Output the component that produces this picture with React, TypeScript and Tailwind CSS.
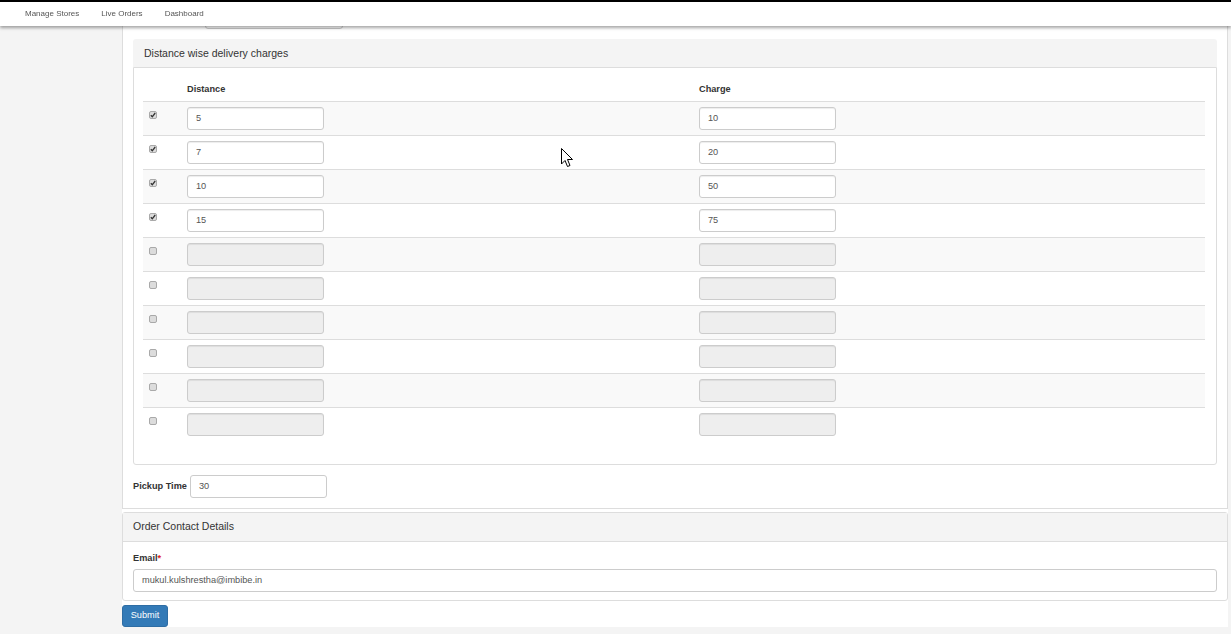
const rows = [
  { on: true, distance: "5", charge: "10" },
  { on: true, distance: "7", charge: "20" },
  { on: true, distance: "10", charge: "50" },
  { on: true, distance: "15", charge: "75" },
  { on: false, distance: "", charge: "" },
  { on: false, distance: "", charge: "" },
  { on: false, distance: "", charge: "" },
  { on: false, distance: "", charge: "" },
  { on: false, distance: "", charge: "" },
  { on: false, distance: "", charge: "" },
];

function Check({ on }: { on: boolean }) {
  return (
    <span className="mt-[3px] flex h-[8px] w-[8px] items-center justify-center rounded-[2px] border border-[#a9a9a9] bg-[#dcdcdc]">
      {on ? (
        <svg width="6" height="6" viewBox="0 0 6 6">
          <path d="M0.8 3.2 L2.3 4.8 L5.2 1" fill="none" stroke="#333" strokeWidth="1.3" />
        </svg>
      ) : null}
    </span>
  );
}

function Field({ value, disabled }: { value: string; disabled: boolean }) {
  return (
    <div
      className={
        "flex h-[23px] w-[137px] items-center rounded-[3px] border border-[#ccc] px-[8px] text-[9.2px] text-[#555] shadow-[inset_0_1px_1px_rgba(0,0,0,0.075)] " +
        (disabled ? "bg-[#eee]" : "bg-white")
      }
    >
      {value}
    </div>
  );
}

export default function App() {
  return (
    <div className="relative min-h-[634px] overflow-hidden bg-[#f4f4f4] font-['Liberation_Sans',Arial,sans-serif] text-[#333]">
      {/* fixed top bar */}
      <div className="fixed left-0 right-0 top-0 z-10 flex h-[26px] items-center border-t-2 border-black bg-white text-[8px] text-[#555] shadow-[0_2px_3px_rgba(0,0,0,0.35)]">
        <span className="ml-[25px]">Manage Stores</span>
        <span className="ml-[22px]">Live Orders</span>
        <span className="ml-[22px]">Dashboard</span>
      </div>

      <div className="ml-[122px] w-[1106px] bg-white">
        {/* store details panel */}
        <div className="border-x border-b border-[#ddd] px-[10px] pb-[10px]">
          <div className="ml-[72px] mt-[6px] h-[23px] w-[138px] rounded-[3px] border border-[#ccc]"></div>

          <div className="mt-[10px]">
            <div className="flex h-[28px] items-center rounded-t-[3px] bg-[#f4f4f4] px-[11px] pt-[1px] text-[10.5px] text-[#333]">
              Distance wise delivery charges
            </div>
            <div className="rounded-b-[3px] border border-[#ddd] bg-white px-[9px] pb-[23px] pt-[10px]">
              <div className="w-[1062px] text-[9.2px]">
                <div className="flex h-[24px] items-center border-b border-[#ddd] font-bold">
                  <div className="w-[38px]"></div>
                  <div className="w-[512px] pl-[6px]">Distance</div>
                  <div className="pl-[6px]">Charge</div>
                </div>
                {rows.map((r, i) => (
                  <div
                    key={i}
                    className={
                      "flex items-start pt-[5px] " +
                      (i > 0 ? "h-[34px] border-t border-[#ddd] " : "h-[33px] ") +
                      (i % 2 === 0 ? "bg-[#f9f9f9]" : "bg-white")
                    }
                  >
                    <div className="w-[38px] pl-[6px] pt-[1px]">
                      <Check on={r.on} />
                    </div>
                    <div className="w-[512px] pl-[6px]">
                      <Field value={r.distance} disabled={!r.on} />
                    </div>
                    <div className="pl-[6px]">
                      <Field value={r.charge} disabled={!r.on} />
                    </div>
                  </div>
                ))}
              </div>
            </div>
          </div>

          <div className="mt-[10px] flex items-center">
            <span className="text-[9.2px] font-bold">Pickup Time</span>
            <div className="ml-[3px] flex h-[23px] w-[137px] items-center rounded-[3px] border border-[#ccc] px-[8px] text-[9.2px] text-[#555]">
              30
            </div>
          </div>
        </div>

        {/* order contact panel */}
        <div className="mt-[3px] rounded-[3px] border border-[#ddd]">
          <div className="flex h-[29px] items-center border-b border-[#ddd] bg-[#f4f4f4] px-[10px] text-[10.5px]">
            Order Contact Details
          </div>
          <div className="px-[10px] pb-[8px] pt-[10px]">
            <div className="text-[9.2px] font-bold leading-[12px]">
              Email<span className="text-[#e02020]">*</span>
            </div>
            <div className="mt-[5px] flex h-[23px] w-full items-center rounded-[3px] border border-[#ccc] px-[8px] text-[9.2px] text-[#555]">
              mukul.kulshrestha@imbibe.in
            </div>
          </div>
        </div>

        <div className="flex pt-[4px]">
          <button className="h-[22px] w-[46px] rounded-[3px] border border-[#2e6da4] bg-[#337ab7] text-[9.2px] text-white">
            Submit
          </button>
        </div>
      </div>

      {/* mouse pointer */}
      <svg className="absolute left-[561px] top-[148px]" width="13" height="20" viewBox="0 0 13 20">
        <path d="M0.5 0.5 L0.5 16 L4 12.5 L6.5 18.5 L9 17.5 L6.5 11.5 L11.5 11.5 Z" fill="white" stroke="black" strokeWidth="1" />
      </svg>
    </div>
  );
}
